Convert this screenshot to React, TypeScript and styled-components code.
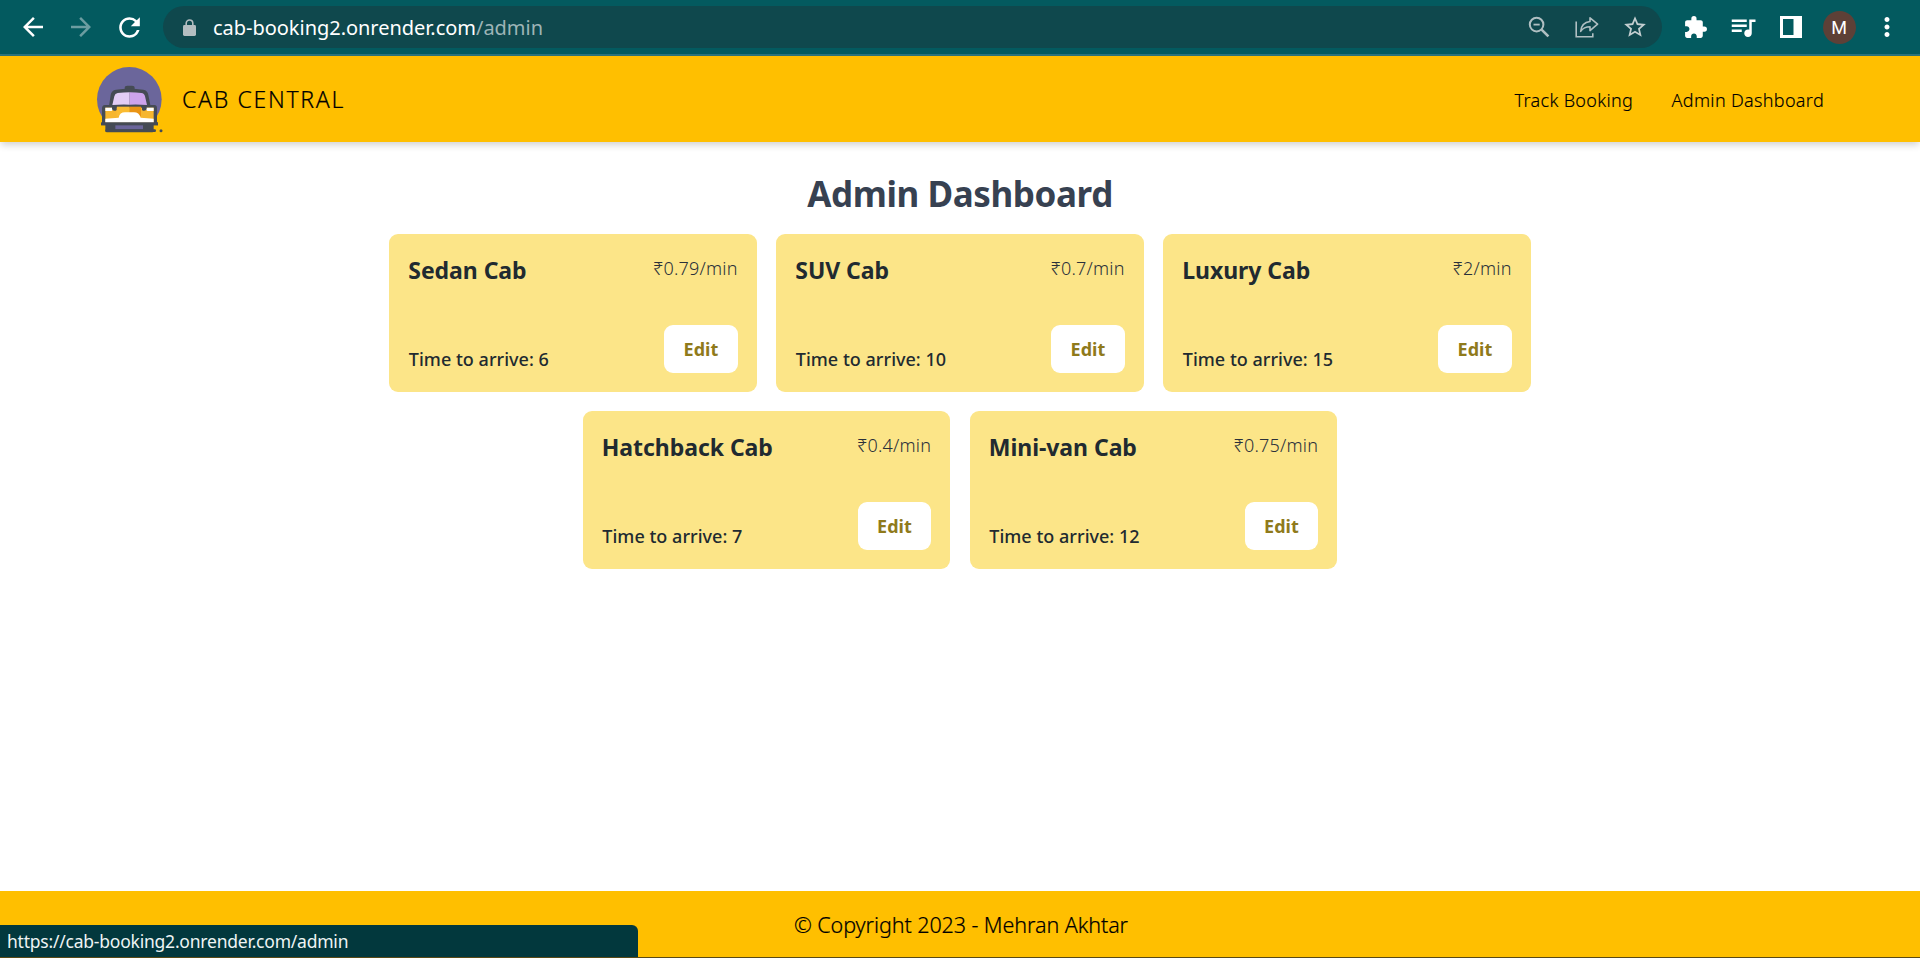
import React from 'react';
import styled, { createGlobalStyle } from 'styled-components';
import {
  MdArrowBack,
  MdArrowForward,
  MdExtension,
  MdMoreVert,
  MdQueueMusic,
  MdRefresh,
  MdStarBorder,
} from 'react-icons/md';

const GlobalStyle = createGlobalStyle`
  *, *::before, *::after { box-sizing: border-box; }
  body {
    margin: 0;
    background: #fff;
    font-family: "Segoe UI", "Noto Sans", "Open Sans", sans-serif;
    overflow: hidden;
  }
`;

const Window = styled.div`
  position: relative;
  display: flex;
  flex-direction: column;
  width: 100%;
  height: 958px;
`;

/* ---------- browser toolbar ---------- */

const Toolbar = styled.div`
  display: flex;
  align-items: center;
  flex: none;
  height: 56px;
  padding: 0 9px;
  background: #035a5f;
  border-bottom: 2px solid #2c747b;
`;

const ToolSlot = styled.span<{ $color?: string }>`
  display: flex;
  align-items: center;
  justify-content: center;
  flex: none;
  width: 48px;
  height: 42px;
  color: ${(p) => p.$color ?? '#fff'};
`;

const AddressBar = styled.div`
  display: flex;
  align-items: center;
  flex: 1;
  height: 42px;
  margin: 0 9px 0 10px;
  padding: 0 3px 0 20px;
  border-radius: 21px;
  background: #0f484d;
`;

const Url = styled.span`
  flex: 1;
  margin-left: 17px;
  padding-top: 1px;
  font-size: 20px;
  line-height: 28px;
  letter-spacing: -0.03px;
  color: #fff;
`;

const UrlPath = styled.span`
  color: #9db4b6;
`;

const Avatar = styled.span`
  display: flex;
  align-items: center;
  justify-content: center;
  width: 33px;
  height: 33px;
  border-radius: 50%;
  background: #5d4037;
  color: #fff;
  font: 400 18px/33px Roboto, sans-serif;
`;

/* ---------- site header ---------- */

const Header = styled.header`
  display: flex;
  align-items: center;
  justify-content: space-between;
  flex: none;
  height: 86px;
  padding: 0 96px;
  background: #ffbf00;
  box-shadow: 0 4px 7px -1px rgba(0, 0, 0, 0.18);
`;

const Brand = styled.div`
  display: flex;
  align-items: center;
  gap: 18px;
`;

const BrandName = styled.span`
  font-size: 23px;
  font-weight: 300;
  line-height: 32px;
  letter-spacing: 1.68px;
  color: #000;
  -webkit-text-stroke: 0.2px #000;
`;

const Nav = styled.nav`
  display: flex;
  gap: 38.5px;
  padding-top: 2px;
`;

const NavLink = styled.a`
  font-size: 18px;
  font-weight: 300;
  line-height: 26px;
  letter-spacing: 0.32px;
  color: #000;
  -webkit-text-stroke: 0.15px #000;
`;

/* ---------- dashboard ---------- */

const Main = styled.main`
  display: flex;
  flex-direction: column;
  align-items: center;
  flex: 1;
  padding-top: 29px;
`;

const Title = styled.h1`
  margin: 0 0 18px;
  font-size: 35px;
  font-weight: 700;
  line-height: 45px;
  letter-spacing: -0.4px;
  color: #374151;
`;

const Cards = styled.div`
  display: flex;
  flex-wrap: wrap;
  justify-content: center;
  gap: 19px 19.2px;
  width: 1143px;
`;

const Card = styled.article`
  display: flex;
  flex-direction: column;
  justify-content: space-between;
  width: 367.8px;
  height: 158px;
  padding: 22px 19.2px 19px;
  border-radius: 9px;
  background: #fce588;
`;

const CardRow = styled.div<{ $align: 'flex-start' | 'flex-end' }>`
  display: flex;
  justify-content: space-between;
  align-items: ${(p) => p.$align};
`;

const CabName = styled.h2`
  margin: 0;
  font-size: 23px;
  font-weight: 700;
  line-height: 28px;
  letter-spacing: -0.05px;
  color: #212a30;
`;

const Rate = styled.span`
  font-size: 18px;
  font-weight: 300;
  line-height: 24px;
  letter-spacing: 0.22px;
  color: #2a303a;
`;

const Arrival = styled.span`
  padding: 0 0 2px 0.5px;
  font-size: 18px;
  font-weight: 500;
  line-height: 24px;
  letter-spacing: 0.02px;
  color: #212a30;
`;

const EditButton = styled.button`
  width: 73.6px;
  height: 48px;
  padding: 0;
  border: 0;
  border-radius: 9px;
  background: #fff;
  color: #8f7a1b;
  font-family: inherit;
  font-size: 18px;
  font-weight: 700;
  line-height: 24px;
`;

/* ---------- footer ---------- */

const Footer = styled.footer`
  display: flex;
  align-items: center;
  justify-content: center;
  flex: none;
  height: 67px;
  padding: 2px 0 0 2px;
  background: #ffbf00;
  border-bottom: 1px solid #5a4a16;
`;

const Copyright = styled.span`
  font-size: 21.5px;
  font-weight: 300;
  line-height: 30px;
  letter-spacing: -0.08px;
  color: #000;
  -webkit-text-stroke: 0.2px #000;
`;

const LinkStatus = styled.div`
  position: absolute;
  left: 0;
  bottom: 1px;
  width: 638px;
  height: 32px;
  padding: 1px 7px 0;
  border-radius: 0 6px 0 0;
  background: #02383d;
  color: #eef4f4;
  font-size: 17.5px;
  line-height: 31px;
  letter-spacing: -0.22px;
`;

const LockIcon = () => (
  <svg width="13" height="17" viewBox="0 0 13 17">
    <rect x="0" y="6" width="13" height="11" rx="1.4" fill="#b3bdc0" />
    <path d="M3.2 7V4.3a3.3 3.3 0 0 1 6.6 0V7" fill="none" stroke="#b3bdc0" strokeWidth="1.6" />
  </svg>
);

const ZoomOutIcon = () => (
  <svg width="24" height="24" viewBox="0 0 24 24" fill="none" stroke="currentColor">
    <circle cx="9.6" cy="9.6" r="6.8" strokeWidth="2" />
    <path d="M6.5 9.6h6.2" strokeWidth="1.8" />
    <path d="M14.6 14.6l6.8 6.8" strokeWidth="2.6" />
  </svg>
);

const ShareIcon = () => (
  <svg width="26" height="24" viewBox="0 0 26 24" fill="none" stroke="currentColor" strokeWidth="1.6">
    <path d="M2.2 6.5v15.3h16.6v-3.6" />
    <path d="M16 2.8l7.6 6.4-7.6 6.4v-3.8c-4.2 0-7 1.2-9.3 4.5.5-5.2 3.6-9.2 9.3-9.8z" strokeLinejoin="round" />
  </svg>
);

const SidePanelIcon = () => (
  <svg width="22" height="22" viewBox="0 0 22 22">
    <path d="M0 0h22v22H0zM3 3v16h10.5V3z" fill="currentColor" fillRule="evenodd" />
  </svg>
);

const TaxiLogo = () => (
  <svg width="68" height="68" viewBox="0 -4 204 204">
    <circle cx="100" cy="99" r="97" fill="#6b669b" />
    <path d="M86 74v-9q0-7 8-7h14q8 0 8 7v9z" fill="#454b54" />
    <path d="M38 126l6-40q2-14 16-16 40-5 82 0 13 2 15 16l8 40z" fill="#454b54" />
    <path d="M49 116l6-26q2-9 10-10 18-2 36-2v37q-26-1-52 1z" fill="#e3cdf5" />
    <path d="M101 78q20 0 35 2 9 1 11 10l6 26q-26-2-52-1z" fill="#cda3ec" />
    <path d="M27 116h148q8 0 8 9v44h3v8H15v-8h3v-44q1-9 9-9z" fill="#454b54" />
    <path d="M28 124h73v46H28z" fill="#f6b62f" />
    <path d="M101 124h72v46h-72z" fill="#f6b62f" />
    <path d="M62 121h39v28H62z" fill="#fabb31" />
    <path d="M101 121h34v28h-34z" fill="#ea9414" />
    <path d="M28 124h26l-7 10H28zM173 124h-27l8 10h19z" fill="#fff" />
    <path d="M48 118h14v13q-7 6-14-2zM138 118h14v11q-7 8-14 2z" fill="#454b54" />
    <path d="M28 157l40-3q3-16 19-16h27q15 0 20 16l39 3v12H28z" fill="#fff" />
    <path d="M16 168h170v9H16z" fill="#454b54" />
    <path d="M28 174h145v20q0 4-4 4H33q-5 0-5-5z" fill="#454b54" />
    <path d="M58 177h83v12H58z" fill="#6b669b" />
    <path d="M32 193h144" stroke="#454b54" strokeWidth="8" strokeLinecap="round" />
    <circle cx="195" cy="193" r="4.5" fill="#454b54" />
  </svg>
);

const CABS = [
  { name: 'Sedan Cab', rate: '0.79', arrival: 6 },
  { name: 'SUV Cab', rate: '0.7', arrival: 10 },
  { name: 'Luxury Cab', rate: '2', arrival: 15 },
  { name: 'Hatchback Cab', rate: '0.4', arrival: 7 },
  { name: 'Mini-van Cab', rate: '0.75', arrival: 12 },
];

const MUTED = '#b0bfc2';

export default function App() {
  return (
    <Window>
      <GlobalStyle />
      <Toolbar>
        <ToolSlot><MdArrowBack size={30} /></ToolSlot>
        <ToolSlot $color="#6c9da1"><MdArrowForward size={30} /></ToolSlot>
        <ToolSlot><MdRefresh size={31} /></ToolSlot>
        <AddressBar>
          <LockIcon />
          <Url>cab-booking2.onrender.com<UrlPath>/admin</UrlPath></Url>
          <ToolSlot $color={MUTED}><ZoomOutIcon /></ToolSlot>
          <ToolSlot $color={MUTED}><ShareIcon /></ToolSlot>
          <ToolSlot $color="#c3ced0"><MdStarBorder size={26} /></ToolSlot>
        </AddressBar>
        <ToolSlot><MdExtension size={25} /></ToolSlot>
        <ToolSlot><MdQueueMusic size={30} /></ToolSlot>
        <ToolSlot><SidePanelIcon /></ToolSlot>
        <ToolSlot><Avatar>M</Avatar></ToolSlot>
        <ToolSlot><MdMoreVert size={30} /></ToolSlot>
      </Toolbar>

      <Header>
        <Brand>
          <TaxiLogo />
          <BrandName>CAB CENTRAL</BrandName>
        </Brand>
        <Nav>
          <NavLink>Track Booking</NavLink>
          <NavLink>Admin Dashboard</NavLink>
        </Nav>
      </Header>

      <Main>
        <Title>Admin Dashboard</Title>
        <Cards>
          {CABS.map((cab) => (
            <Card key={cab.name}>
              <CardRow $align="flex-start">
                <CabName>{cab.name}</CabName>
                <Rate>{`₹${cab.rate}/min`}</Rate>
              </CardRow>
              <CardRow $align="flex-end">
                <Arrival>{`Time to arrive: ${cab.arrival}`}</Arrival>
                <EditButton>Edit</EditButton>
              </CardRow>
            </Card>
          ))}
        </Cards>
      </Main>

      <Footer>
        <Copyright>© Copyright 2023 - Mehran Akhtar</Copyright>
      </Footer>
      <LinkStatus>https://cab-booking2.onrender.com/admin</LinkStatus>
    </Window>
  );
}
